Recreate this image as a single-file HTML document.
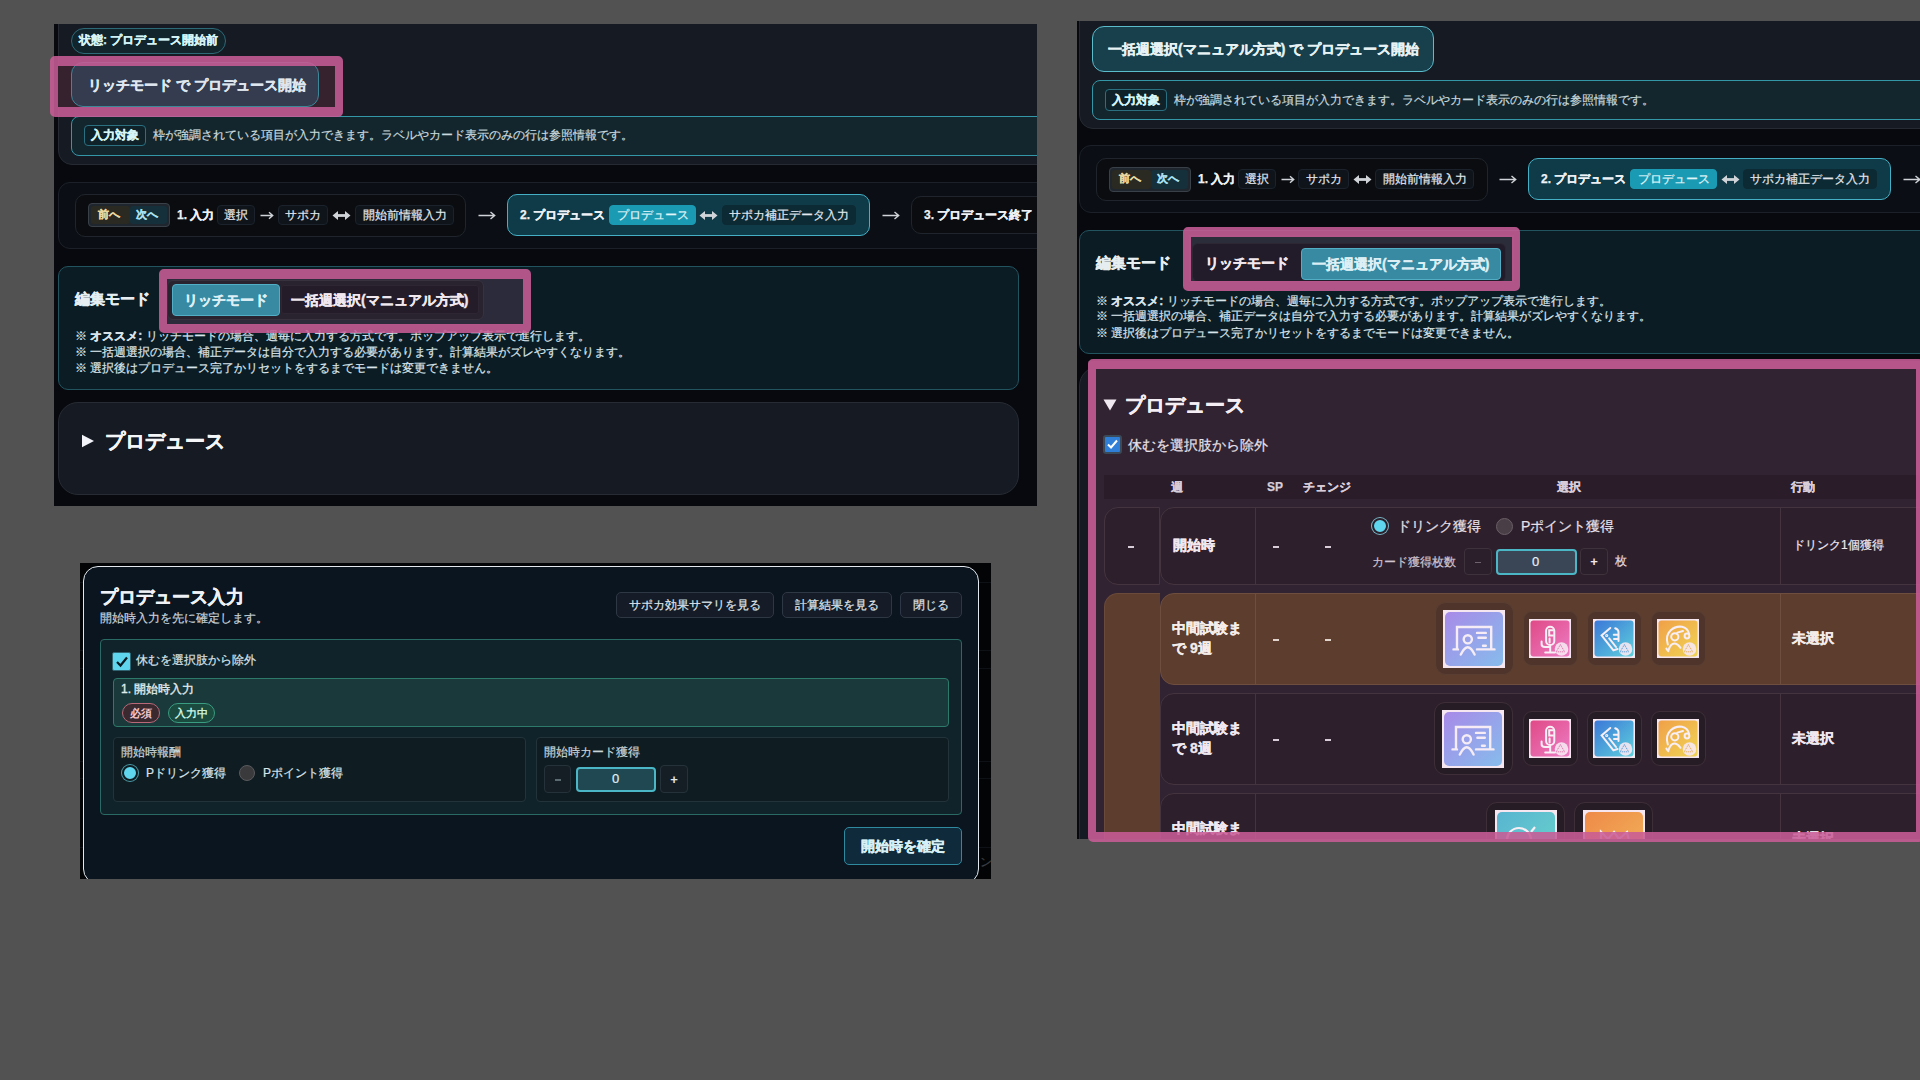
<!DOCTYPE html>
<html lang="ja">
<head>
<meta charset="utf-8">
<style>
*{box-sizing:border-box;margin:0;padding:0}
html,body{width:1920px;height:1080px;overflow:hidden;background:#525252;font-family:"Liberation Sans",sans-serif;color:#e6edf3}
.a{position:absolute}
.t{position:absolute;white-space:nowrap;line-height:1}
.t:not(.b){-webkit-text-stroke:0.2px currentColor}
.t b{-webkit-text-stroke:0.3px currentColor}
.b{font-weight:bold;-webkit-text-stroke:0.25px currentColor}
.bb{-webkit-text-stroke:0.35px currentColor}
.clip{position:absolute;overflow:hidden}
.pink{position:absolute;border:8px solid rgba(200,92,150,0.88);border-width:10px 8px 10px 8px;border-radius:5px}
.pfill{position:absolute;background:#36222f}
.chip{position:absolute;border-radius:4px;background:#0f141b;border:1px solid #1b222b;font-size:12px;color:#e2e8ee;-webkit-text-stroke:0.2px currentColor;display:flex;align-items:center;justify-content:center}
.btn{position:absolute;background:#151c27;border:1px solid #2e3744;border-radius:5px;font-size:12px;color:#dfe5ea;-webkit-text-stroke:0.2px currentColor;display:flex;align-items:center;justify-content:center;line-height:1}
.badge{position:absolute;border:1px solid;border-radius:10px;font-size:11px;font-weight:bold;display:flex;align-items:center;justify-content:center;line-height:1}
.sbtn{position:absolute;background:#141e24;border:1px solid #26323a;border-radius:4px;font-size:13px;display:flex;align-items:center;justify-content:center;line-height:1}
</style>
</head>
<body>
<svg width="0" height="0" style="position:absolute">
<defs>
<linearGradient id="gP" x1="0" y1="0" x2="1" y2="1"><stop offset="0" stop-color="#a88ae8"/><stop offset="1" stop-color="#86bcec"/></linearGradient>
<linearGradient id="gK" x1="0" y1="0" x2="1" y2="1"><stop offset="0" stop-color="#e04a86"/><stop offset="1" stop-color="#ec7cc4"/></linearGradient>
<linearGradient id="gB" x1="0" y1="0" x2="1" y2="1"><stop offset="0" stop-color="#3c78d8"/><stop offset="1" stop-color="#5ed0dc"/></linearGradient>
<linearGradient id="gO" x1="0" y1="0" x2="1" y2="1"><stop offset="0" stop-color="#f0a048"/><stop offset="1" stop-color="#f0d454"/></linearGradient>
<linearGradient id="gT" x1="0" y1="0" x2="1" y2="1"><stop offset="0" stop-color="#58b4d0"/><stop offset="1" stop-color="#6ad4cc"/></linearGradient>
<linearGradient id="gR" x1="0" y1="0" x2="1" y2="1"><stop offset="0" stop-color="#ee8a48"/><stop offset="1" stop-color="#f2b45a"/></linearGradient>
</defs></svg>

<!-- ================= PANEL A ================= -->
<div class="clip" style="left:54px;top:24px;width:983px;height:482px;background:#07090e">
  <!-- top container -->
  <div class="a" style="left:4px;top:-20px;width:1000px;height:161px;background:#161a22;border:1px solid #262b33;border-radius:0 0 0 14px"></div>
  <!-- status pill -->
  <div class="a" style="left:17px;top:4px;width:155px;height:26px;border:1px solid #2d6a78;background:#12242c;border-radius:13px"></div>
  <div class="t b" style="left:25px;top:10px;font-size:12px;color:#d5f5f7">状態: プロデュース開始前</div>
  <div class="pfill" style="left:4px;top:42px;width:277px;height:41px"></div>
  <!-- start button -->
  <div class="a" style="left:17px;top:38px;width:248px;height:45px;border:1px solid #3c8798;background:#363c50;border-radius:12px"></div>
  <div class="t b bb" style="left:34px;top:54px;font-size:14px;color:#dfe6ee">リッチモード で プロデュース開始</div>
  <!-- info bar -->
  <div class="a" style="left:17px;top:92px;width:1000px;height:40px;border:1px solid #3497a8;background:#13262e;border-radius:8px"></div>
  <div class="a" style="left:30px;top:101px;width:62px;height:21px;border:1px solid #2a7080;background:#0f2229;border-radius:4px"></div>
  <div class="t b" style="left:37px;top:105px;font-size:12px;color:#d5f5f7">入力対象</div>
  <div class="t" style="left:99px;top:105px;font-size:12px;color:#c8d8dc">枠が強調されている項目が入力できます。ラベルやカード表示のみの行は参照情報です。</div>

  <!-- stepper -->
  <div class="a" style="left:4px;top:158px;width:1000px;height:67px;border:1px solid #1c2129;background:#0b0e14;border-radius:12px"></div>
  <div class="a" style="left:21px;top:170px;width:391px;height:43px;border:1px solid #20252d;background:#0a0c10;border-radius:10px"></div>
  <div class="a" style="left:34px;top:179px;width:82px;height:24px;border:1px solid #3a4048;background:#20262e;border-radius:4px"></div>
  <div class="a" style="left:37px;top:182px;width:39px;height:18px;background:#2a2a22;border-radius:3px"></div>
  <div class="a" style="left:76px;top:182px;width:37px;height:18px;background:#15303a;border-radius:3px"></div>
  <div class="t b" style="left:44px;top:185px;font-size:11px;color:#e8d8a0">前へ</div>
  <div class="t b" style="left:82px;top:185px;font-size:11px;color:#a8e0f0">次へ</div>
  <div class="t b" style="left:123px;top:185px;font-size:12px;color:#eef2f6">1. 入力</div>
  <div class="chip" style="left:163px;top:181px;width:38px;height:20px">選択</div>
  <svg class="a" style="left:206px;top:186px" width="14" height="11"><path d="M0.5 5.5H12.5M9 2.3L12.7 5.5L9 8.7" stroke="#d0d4d8" stroke-width="1.4" fill="none"/></svg>
  <div class="chip" style="left:224px;top:181px;width:50px;height:20px">サポカ</div>
  <svg class="a" style="left:278px;top:186px" width="19" height="11"><path d="M3.5 5.5H15.5" stroke="#d0d4d8" stroke-width="2.8"/><path d="M0.5 5.5L6 1V10Z M18.5 5.5L13 1V10Z" fill="#d0d4d8"/></svg>
  <div class="chip" style="left:301px;top:181px;width:99px;height:20px">開始前情報入力</div>
  <svg class="a" style="left:424px;top:186px" width="18" height="11"><path d="M0.5 5.5H16.5M12.5 2L16.7 5.5L12.5 9" stroke="#d0d4d8" stroke-width="1.4" fill="none"/></svg>
  <div class="a" style="left:453px;top:170px;width:363px;height:42px;border:1px solid #45b0c5;background:#0f3a48;border-radius:10px"></div>
  <div class="t b" style="left:466px;top:185px;font-size:12px;color:#eef2f6">2. プロデュース</div>
  <div class="chip" style="left:555px;top:181px;width:87px;height:20px;background:#1b9bb3;border-color:#1b9bb3;color:#e0f6fa">プロデュース</div>
  <svg class="a" style="left:645px;top:186px" width="19" height="11"><path d="M3.5 5.5H15.5" stroke="#d0d4d8" stroke-width="2.8"/><path d="M0.5 5.5L6 1V10Z M18.5 5.5L13 1V10Z" fill="#d0d4d8"/></svg>
  <div class="chip" style="left:668px;top:181px;width:134px;height:20px;background:#0c2a33;border-color:#0c2a33">サポカ補正データ入力</div>
  <svg class="a" style="left:828px;top:186px" width="18" height="11"><path d="M0.5 5.5H16.5M12.5 2L16.7 5.5L12.5 9" stroke="#d0d4d8" stroke-width="1.4" fill="none"/></svg>
  <div class="a" style="left:857px;top:172px;width:200px;height:38px;border:1px solid #20252d;background:#0a0c10;border-radius:10px"></div>
  <div class="t b" style="left:870px;top:185px;font-size:12px;color:#eef2f6">3. プロデュース終了</div>

  <!-- edit mode -->
  <div class="a" style="left:4px;top:242px;width:961px;height:124px;border:1px solid #22545f;background:#0c1c25;border-radius:10px"></div>
  <div class="t b bb" style="left:21px;top:267px;font-size:15px;color:#e6eef2">編集モード</div>
  <div class="pfill" style="left:113px;top:255px;width:356px;height:46px;background:#2b2b3b"></div>
  <div class="a" style="left:113px;top:256px;width:317px;height:40px;border:1px solid #38323e;background:#28232e;border-radius:6px"></div>
  <div class="a" style="left:118px;top:260px;width:108px;height:32px;background:#3889a2;border:1px solid #52aec4;border-radius:4px"></div>
  <div class="a" style="left:227px;top:261px;width:198px;height:29px;background:#241c28;border:1px solid #2e2632;border-radius:3px"></div>
  <div class="t b bb" style="left:130px;top:269px;font-size:14px;color:#dceff5">リッチモード</div>
  <div class="t b bb" style="left:237px;top:269px;font-size:14px;color:#f0e8ee">一括週選択(マニュアル方式)</div>
  <div class="t" style="left:21px;top:306px;font-size:12px;color:#d8e4ea">※ <b>オススメ:</b> リッチモードの場合、週毎に入力する方式です。ポップアップ表示で進行します。</div>
  <div class="t" style="left:21px;top:322px;font-size:12px;color:#d8e4ea">※ 一括週選択の場合、補正データは自分で入力する必要があります。計算結果がズレやすくなります。</div>
  <div class="t" style="left:21px;top:338px;font-size:12px;color:#d8e4ea">※ 選択後はプロデュース完了かリセットをするまでモードは変更できません。</div>

  <!-- collapsed produce -->
  <div class="a" style="left:4px;top:378px;width:961px;height:93px;border:1px solid #272b34;background:#161a22;border-radius:20px"></div>
  <svg class="a" style="left:28px;top:410px" width="12" height="14"><path d="M0 0.8V13.2L12 7Z" fill="#f2f4fa"/></svg>
  <div class="t b bb" style="left:51px;top:407px;font-size:20px;color:#f4f6f8">プロデュース</div>
</div>
<div class="pink" style="left:50px;top:56px;width:293px;height:61px"></div>
<div class="pink" style="left:159px;top:269px;width:372px;height:64px;border-width:10px 8px 9px 8px"></div>

<!-- ================= PANEL B ================= -->
<div class="clip" style="left:80px;top:563px;width:911px;height:316px;background:#030405">
  <div class="a" style="left:0;top:19px;width:911px;height:1px;background:#0e1216"></div>
  <div class="a" style="left:0;top:87px;width:911px;height:1px;background:#0e1216"></div>
  <div class="a" style="left:0;top:284px;width:911px;height:1px;background:#0e1216"></div>
  <div class="a" style="left:0;top:105px;width:911px;height:1px;background:#0e1216"></div>
  <div class="a" style="left:0;top:198px;width:911px;height:1px;background:#0e1216"></div>
  <div class="a" style="left:0;top:215px;width:911px;height:1px;background:#0e1216"></div>
  <div class="t" style="left:900px;top:293px;font-size:12px;color:#3a3e44">ンに</div>
  <!-- modal -->
  <div class="a" style="left:3px;top:3px;width:896px;height:318px;background:#0b1520;border:1px solid #e2e8ee;border-radius:15px"></div>
  <div class="t b bb" style="left:20px;top:25px;font-size:18px;color:#eef2f6">プロデュース入力</div>
  <div class="t" style="left:20px;top:49px;font-size:12px;color:#c8d2da">開始時入力を先に確定します。</div>
  <div class="btn" style="left:536px;top:29px;width:158px;height:26px">サポカ効果サマリを見る</div>
  <div class="btn" style="left:702px;top:29px;width:110px;height:26px">計算結果を見る</div>
  <div class="btn" style="left:820px;top:29px;width:62px;height:26px">閉じる</div>
  <!-- green section -->
  <div class="a" style="left:20px;top:76px;width:862px;height:176px;background:#11232a;border:1px solid #2a6a64;border-radius:4px"></div>
  <div class="a" style="left:32px;top:89px;width:19px;height:19px;background:#5fd6ee;border:1px solid #2f6470;border-radius:2px"></div>
  <svg class="a" style="left:35px;top:92px" width="14" height="13"><path d="M2 7L5.5 10.5L12 2.5" stroke="#0b1a20" stroke-width="2.2" fill="none"/></svg>
  <div class="t" style="left:56px;top:91px;font-size:12px;color:#d8e4ea">休むを選択肢から除外</div>
  <div class="a" style="left:33px;top:115px;width:836px;height:49px;background:#19393b;border:1px solid #2d7a6a;border-radius:4px"></div>
  <div class="t" style="left:41px;top:120px;font-size:12px;color:#e0ecec;-webkit-text-stroke:0.35px currentColor">1. 開始時入力</div>
  <div class="badge" style="left:42px;top:140px;width:38px;height:20px;background:#3a2a30;border-color:#b86878;color:#f4c8d0">必須</div>
  <div class="badge" style="left:88px;top:140px;width:47px;height:20px;background:#1b4a3f;border-color:#3a9c80;color:#c8f4e0">入力中</div>
  <!-- sub boxes -->
  <div class="a" style="left:33px;top:174px;width:413px;height:65px;background:#0f1d22;border:1px solid #22343a;border-radius:4px"></div>
  <div class="t" style="left:41px;top:183px;font-size:12px;color:#c8d4d8">開始時報酬</div>
  <div class="a" style="left:42px;top:202px;width:16px;height:16px;border-radius:50%;background:#5fd6ee;border:2px solid #0f1d22;box-shadow:0 0 0 1px #4a9aa8"></div>
  <div class="t" style="left:66px;top:204px;font-size:12px;color:#d8e4ea">Pドリンク獲得</div>
  <div class="a" style="left:159px;top:202px;width:16px;height:16px;border-radius:50%;background:#3a3a3c;border:1px solid #5a5a5e"></div>
  <div class="t" style="left:183px;top:204px;font-size:12px;color:#d8e4ea">Pポイント獲得</div>
  <div class="a" style="left:456px;top:174px;width:413px;height:65px;background:#0f1d22;border:1px solid #22343a;border-radius:4px"></div>
  <div class="t" style="left:464px;top:183px;font-size:12px;color:#c8d4d8">開始時カード獲得</div>
  <div class="sbtn" style="left:464px;top:202px;width:27px;height:28px;color:#66767c"><span style="display:block;width:6px;height:1.5px;background:#5a6a70;margin-top:2px"></span></div>
  <div class="a" style="left:496px;top:204px;width:80px;height:25px;background:#1f4852;border:2px solid #4ab6c6;border-radius:4px"></div>
  <div class="t" style="left:532px;top:209px;font-size:13px;color:#e0f0f4">0</div>
  <div class="sbtn" style="left:580px;top:202px;width:28px;height:28px;color:#e0e8ec;font-weight:bold">+</div>
  <!-- confirm -->
  <div class="a" style="left:764px;top:264px;width:118px;height:38px;background:#0f2a3b;border:1px solid #2f8aa0;border-radius:5px"></div>
  <div class="t b bb" style="left:781px;top:276px;font-size:14px;color:#d6f0f6">開始時を確定</div>
</div>

<!-- ================= PANEL C ================= -->
<div class="clip" style="left:1077px;top:21px;width:843px;height:818px;background:#07090e">
  <!-- top container -->
  <div class="a" style="left:2px;top:-20px;width:900px;height:128px;background:#161a22;border:1px solid #262b33;border-radius:0 0 0 14px"></div>
  <div class="a" style="left:15px;top:5px;width:342px;height:46px;border:1px solid #5bbccc;background:#173f4c;border-radius:12px"></div>
  <div class="t b bb" style="left:31px;top:21px;font-size:14px;color:#e6f2f4">一括週選択(マニュアル方式) で プロデュース開始</div>
  <div class="a" style="left:15px;top:59px;width:900px;height:40px;border:1px solid #3497a8;background:#13262e;border-radius:8px"></div>
  <div class="a" style="left:28px;top:68px;width:62px;height:22px;border:1px solid #2a7080;background:#0f2229;border-radius:4px"></div>
  <div class="t b" style="left:35px;top:73px;font-size:12px;color:#d5f5f7">入力対象</div>
  <div class="t" style="left:97px;top:73px;font-size:12px;color:#c8d8dc">枠が強調されている項目が入力できます。ラベルやカード表示のみの行は参照情報です。</div>

  <!-- stepper -->
  <div class="a" style="left:2px;top:124px;width:900px;height:68px;border:1px solid #1c2129;background:#0b0e14;border-radius:12px"></div>
  <div class="a" style="left:19px;top:137px;width:392px;height:43px;border:1px solid #20252d;background:#0a0c10;border-radius:10px"></div>
  <div class="a" style="left:32px;top:146px;width:82px;height:25px;border:1px solid #3a4048;background:#20262e;border-radius:4px"></div>
  <div class="a" style="left:35px;top:149px;width:39px;height:19px;background:#2a2a22;border-radius:3px"></div>
  <div class="a" style="left:74px;top:149px;width:37px;height:19px;background:#15303a;border-radius:3px"></div>
  <div class="t b" style="left:42px;top:152px;font-size:11px;color:#e8d8a0">前へ</div>
  <div class="t b" style="left:80px;top:152px;font-size:11px;color:#a8e0f0">次へ</div>
  <div class="t b" style="left:121px;top:152px;font-size:12px;color:#eef2f6">1. 入力</div>
  <div class="chip" style="left:161px;top:148px;width:38px;height:20px">選択</div>
  <svg class="a" style="left:204px;top:153px" width="14" height="11"><path d="M0.5 5.5H12.5M9 2.3L12.7 5.5L9 8.7" stroke="#d0d4d8" stroke-width="1.4" fill="none"/></svg>
  <div class="chip" style="left:221px;top:148px;width:51px;height:20px">サポカ</div>
  <svg class="a" style="left:276px;top:153px" width="19" height="11"><path d="M3.5 5.5H15.5" stroke="#d0d4d8" stroke-width="2.8"/><path d="M0.5 5.5L6 1V10Z M18.5 5.5L13 1V10Z" fill="#d0d4d8"/></svg>
  <div class="chip" style="left:298px;top:148px;width:99px;height:20px">開始前情報入力</div>
  <svg class="a" style="left:422px;top:153px" width="18" height="11"><path d="M0.5 5.5H16.5M12.5 2L16.7 5.5L12.5 9" stroke="#d0d4d8" stroke-width="1.4" fill="none"/></svg>
  <div class="a" style="left:451px;top:137px;width:363px;height:42px;border:1px solid #45b0c5;background:#0f3a48;border-radius:10px"></div>
  <div class="t b" style="left:464px;top:152px;font-size:12px;color:#eef2f6">2. プロデュース</div>
  <div class="chip" style="left:553px;top:148px;width:87px;height:20px;background:#1b9bb3;border-color:#1b9bb3;color:#e0f6fa">プロデュース</div>
  <svg class="a" style="left:644px;top:153px" width="19" height="11"><path d="M3.5 5.5H15.5" stroke="#d0d4d8" stroke-width="2.8"/><path d="M0.5 5.5L6 1V10Z M18.5 5.5L13 1V10Z" fill="#d0d4d8"/></svg>
  <div class="chip" style="left:666px;top:148px;width:134px;height:20px;background:#0c2a33;border-color:#0c2a33">サポカ補正データ入力</div>
  <svg class="a" style="left:826px;top:153px" width="18" height="11"><path d="M0.5 5.5H16.5M12.5 2L16.7 5.5L12.5 9" stroke="#d0d4d8" stroke-width="1.4" fill="none"/></svg>

  <!-- edit mode -->
  <div class="a" style="left:2px;top:209px;width:900px;height:124px;border:1px solid #22545f;background:#0c1c25;border-radius:10px"></div>
  <div class="t b bb" style="left:19px;top:234px;font-size:15px;color:#e6eef2">編集モード</div>
  <div class="pfill" style="left:112px;top:214px;width:325px;height:47px;background:#2c2d3b"></div>
  <div class="a" style="left:115px;top:222px;width:314px;height:39px;border:1px solid #2c2733;background:#221c2a;border-radius:6px"></div>
  <div class="t b bb" style="left:128px;top:235px;font-size:14px;color:#f0e8ee">リッチモード</div>
  <div class="a" style="left:224px;top:227px;width:200px;height:32px;background:#3889a2;border:1px solid #52aec4;border-radius:4px"></div>
  <div class="t b bb" style="left:235px;top:236px;font-size:14px;color:#dceff5">一括週選択(マニュアル方式)</div>
  <div class="t" style="left:19px;top:274px;font-size:12px;color:#d8e4ea">※ <b>オススメ:</b> リッチモードの場合、週毎に入力する方式です。ポップアップ表示で進行します。</div>
  <div class="t" style="left:19px;top:289px;font-size:12px;color:#d8e4ea">※ 一括週選択の場合、補正データは自分で入力する必要があります。計算結果がズレやすくなります。</div>
  <div class="t" style="left:19px;top:306px;font-size:12px;color:#d8e4ea">※ 選択後はプロデュース完了かリセットをするまでモードは変更できません。</div>

  <!-- produce panel -->
  <div class="a" style="left:2px;top:345px;width:900px;height:600px;border:1px solid #272b34;background:#161a22;border-radius:20px"></div>
  <div class="a" style="left:11px;top:340px;width:840px;height:480px;background:#322332"></div>
  <svg class="a" style="left:26px;top:378px" width="14" height="12"><path d="M0.5 0.5H13.5L7 11.5Z" fill="#f0e8f0"/></svg>
  <div class="t b bb" style="left:48px;top:374px;font-size:20px;color:#f4eef4">プロデュース</div>
  <div class="a" style="left:26px;top:414px;width:19px;height:19px;background:#2f7fd8;border:2px solid #3a4a58;border-radius:3px"></div>
  <svg class="a" style="left:29px;top:417px" width="13" height="13"><path d="M2 6.5L5 9.5L11 2.5" stroke="#ffffff" stroke-width="2" fill="none"/></svg>
  <div class="t" style="left:51px;top:417px;font-size:14px;color:#e8e0e8">休むを選択肢から除外</div>

  <!-- table header -->
  <div class="a" style="left:27px;top:454px;width:830px;height:24px;background:#2a1c29"></div>
  <div class="t b" style="left:94px;top:460px;font-size:12px;color:#d8ccd8">週</div>
  <div class="t b" style="left:190px;top:460px;font-size:12px;color:#d8ccd8">SP</div>
  <div class="t b" style="left:226px;top:460px;font-size:12px;color:#d8ccd8">チェンジ</div>
  <div class="t b" style="left:480px;top:460px;font-size:12px;color:#d8ccd8">選択</div>
  <div class="t b" style="left:714px;top:460px;font-size:12px;color:#d8ccd8">行動</div>

  <!-- row 1 -->
  <div class="a" style="left:27px;top:486px;width:56px;height:78px;background:#2e1f2c;border:1px solid #44343f;border-radius:14px 0 0 14px"></div>
  <div class="a" style="left:51px;top:525px;width:6px;height:2px;background:#d8ccd8"></div>
  <div class="a" style="left:83px;top:486px;width:820px;height:78px;background:#2e1f2c;border:1px solid #44343f;border-radius:14px 0 0 14px"></div>
  <div class="a" style="left:178px;top:487px;width:1px;height:76px;background:#44343f"></div>
  <div class="a" style="left:703px;top:487px;width:1px;height:76px;background:#44343f"></div>
  <div class="t b bb" style="left:96px;top:517px;font-size:14px;color:#f0e8f0">開始時</div>
  <div class="a" style="left:196px;top:525px;width:6px;height:2px;background:#d8ccd8"></div>
  <div class="a" style="left:248px;top:525px;width:6px;height:2px;background:#d8ccd8"></div>
  <div class="a" style="left:295px;top:497px;width:16px;height:16px;border-radius:50%;background:#5fd6ee;border:2px solid #2a1f2a;box-shadow:0 0 0 1px #7ab8c8"></div>
  <div class="t" style="left:320px;top:498px;font-size:14px;color:#e8e0e8">ドリンク獲得</div>
  <div class="a" style="left:419px;top:497px;width:17px;height:17px;border-radius:50%;background:#4a3e46;border:1px solid #6a5e66"></div>
  <div class="t" style="left:444px;top:498px;font-size:14px;color:#e8e0e8">Pポイント獲得</div>
  <div class="t" style="left:295px;top:535px;font-size:12px;color:#cfc4cf">カード獲得枚数</div>
  <div class="sbtn" style="left:387px;top:527px;width:28px;height:27px;background:#2a1f2a;border-color:#3e323c;color:#6e626c"><span style="display:block;width:6px;height:1.5px;background:#6e626c;margin-top:2px"></span></div>
  <div class="a" style="left:419px;top:528px;width:81px;height:26px;background:#3a4656;border:2px solid #4ab6c6;border-radius:4px"></div>
  <div class="t" style="left:455px;top:534px;font-size:13px;color:#e8f0f4">0</div>
  <div class="sbtn" style="left:503px;top:527px;width:28px;height:27px;background:#2a1f2a;border-color:#3e323c;color:#f0e8f0;font-weight:bold">+</div>
  <div class="t" style="left:538px;top:534px;font-size:12px;color:#e0d8e0">枚</div>
  <div class="t" style="left:716px;top:518px;font-size:12px;color:#f0e8f0">ドリンク1個獲得</div>

  <!-- week column spanning brown -->
  <div class="a" style="left:27px;top:572px;width:56px;height:400px;background:#5c3d2e;border:1px solid #6a4a3a;border-right:none;border-radius:14px 0 0 0"></div>
  <!-- row 2 brown -->
  <div class="a" style="left:83px;top:572px;width:800px;height:92px;background:#5c3d2e;border:1px solid #6e4e3e;border-radius:14px 0 0 14px"></div>
  <div class="a" style="left:178px;top:573px;width:1px;height:90px;background:#6e4e3e"></div>
  <div class="a" style="left:703px;top:573px;width:1px;height:90px;background:#6e4e3e"></div>
  <div class="t b bb" style="left:95px;top:597px;font-size:14px;line-height:20px;color:#f4ece8;white-space:normal;width:80px">中間試験ま<br>で 9週</div>
  <div class="a" style="left:196px;top:618px;width:6px;height:2px;background:#e0d4cc"></div>
  <div class="a" style="left:248px;top:618px;width:6px;height:2px;background:#e0d4cc"></div>
  <div class="t b bb" style="left:715px;top:610px;font-size:14px;color:#f4ece8">未選択</div>
  <div class="a" style="left:358px;top:581px;width:79px;height:73px;background:#4e342a;border:1px solid #5a3e32;border-radius:11px"></div>
<svg class="a" style="left:366px;top:589px" width="62" height="58" viewBox="0 0 62 58"><rect width="62" height="58" fill="#f6e6f0"/><rect x="2" y="2" width="58" height="54" rx="5" fill="url(#gP)"/>
<g stroke="#f6ecf6" stroke-width="2.4" fill="none" stroke-linecap="round"><path d="M10.5 39.4H15M14 39.4V17H48.2V39.4M34 39.4H51.5"/><circle cx="24.8" cy="29.3" r="4.1"/><path d="M17.8 44.6Q24.8 30 31.6 44.6"/><path d="M34 22.9H42.8M35.4 27.8H42.8M40 35.8H42.8"/></g></svg>
  <div class="a" style="left:446px;top:590px;width:55px;height:55px;background:#4e342a;border:1px solid #5a3e32;border-radius:9px"></div>
<svg class="a" style="left:452px;top:598px" width="42" height="39" viewBox="0 0 42 39"><rect width="42" height="39" fill="#f6e6f0"/><rect x="1.5" y="1.5" width="39" height="36" rx="3" fill="url(#gK)"/>
<g stroke="#f8eef6" stroke-width="2" fill="none" stroke-linecap="round"><rect x="17.1" y="7.7" width="8.2" height="18.4" rx="4.1"/><path d="M23.8 11.2H20.2V16.5H23.8M20.6 19.5V23.5M12.6 22.6V25.2Q12.6 28 16 28H21.2M21.2 27V32.6M16.2 33.4H26"/></g><circle cx="32.5" cy="30" r="6.8" fill="#f6e8f2" opacity="0.9"/><path d="M31.4 25.6L35.6 32.8H27.2Z" stroke="#d86aa0" stroke-width="0.9" fill="none" stroke-dasharray="1.2 0.8"/></svg>
  <div class="a" style="left:510px;top:590px;width:55px;height:55px;background:#4e342a;border:1px solid #5a3e32;border-radius:9px"></div>
<svg class="a" style="left:516px;top:598px" width="42" height="39" viewBox="0 0 42 39"><rect width="42" height="39" fill="#f6e6f0"/><rect x="1.5" y="1.5" width="39" height="36" rx="3" fill="url(#gB)"/>
<g stroke="#f8eef6" stroke-width="2" fill="none" stroke-linecap="round"><path d="M17.3 9L8.6 16.4L20.4 31.4L24.5 30M16.2 19.4L23 28M22.2 9.3Q25.5 10.5 25.5 13V22M20.8 15.8H24.6M21 19.9H24.6"/><circle cx="13.7" cy="16.5" r="0.6"/></g><circle cx="32.5" cy="30" r="6.8" fill="#f6e8f2" opacity="0.9"/><path d="M31.4 25.6L35.6 32.8H27.2Z" stroke="#4a90d0" stroke-width="0.9" fill="none" stroke-dasharray="1.2 0.8"/></svg>
  <div class="a" style="left:574px;top:590px;width:55px;height:55px;background:#4e342a;border:1px solid #5a3e32;border-radius:9px"></div>
<svg class="a" style="left:580px;top:598px" width="42" height="39" viewBox="0 0 42 39"><rect width="42" height="39" fill="#f6e6f0"/><rect x="1.5" y="1.5" width="39" height="36" rx="3" fill="url(#gO)"/>
<g stroke="#f8eef6" stroke-width="2" fill="none" stroke-linecap="round"><path d="M10.8 25.5Q8 17 13.5 11.5Q18.5 6.8 25 7.8Q30.5 9 32 14.5"/><path d="M9.4 29.6L11.2 32.2M11.2 32Q13.5 24.6 17.3 24.6Q20.5 24.6 23.5 28.8M20.3 13.6L26 12"/><circle cx="17.8" cy="17.8" r="3.6"/><circle cx="30" cy="17" r="2.4"/></g><circle cx="32.5" cy="30" r="6.8" fill="#f6e8f2" opacity="0.9"/><path d="M31.4 25.6L35.6 32.8H27.2Z" stroke="#e0a848" stroke-width="0.9" fill="none" stroke-dasharray="1.2 0.8"/></svg>

  <!-- row 3 -->
  <div class="a" style="left:83px;top:672px;width:800px;height:92px;background:#2e1f2c;border:1px solid #44343f;border-radius:14px 0 0 14px"></div>
  <div class="a" style="left:178px;top:673px;width:1px;height:90px;background:#44343f"></div>
  <div class="a" style="left:703px;top:673px;width:1px;height:90px;background:#44343f"></div>
  <div class="t b bb" style="left:95px;top:697px;font-size:14px;line-height:20px;color:#f0e8f0;white-space:normal;width:80px">中間試験ま<br>で 8週</div>
  <div class="a" style="left:196px;top:718px;width:6px;height:2px;background:#d8ccd8"></div>
  <div class="a" style="left:248px;top:718px;width:6px;height:2px;background:#d8ccd8"></div>
  <div class="t b bb" style="left:715px;top:710px;font-size:14px;color:#f0e8f0">未選択</div>
  <div class="a" style="left:357px;top:681px;width:79px;height:73px;background:#261c26;border:1px solid #3e2e38;border-radius:11px"></div>
<svg class="a" style="left:365px;top:689px" width="62" height="58" viewBox="0 0 62 58"><rect width="62" height="58" fill="#f6e6f0"/><rect x="2" y="2" width="58" height="54" rx="5" fill="url(#gP)"/>
<g stroke="#f6ecf6" stroke-width="2.4" fill="none" stroke-linecap="round"><path d="M10.5 39.4H15M14 39.4V17H48.2V39.4M34 39.4H51.5"/><circle cx="24.8" cy="29.3" r="4.1"/><path d="M17.8 44.6Q24.8 30 31.6 44.6"/><path d="M34 22.9H42.8M35.4 27.8H42.8M40 35.8H42.8"/></g></svg>
  <div class="a" style="left:446px;top:690px;width:55px;height:55px;background:#261c26;border:1px solid #3e2e38;border-radius:9px"></div>
<svg class="a" style="left:452px;top:698px" width="42" height="39" viewBox="0 0 42 39"><rect width="42" height="39" fill="#f6e6f0"/><rect x="1.5" y="1.5" width="39" height="36" rx="3" fill="url(#gK)"/>
<g stroke="#f8eef6" stroke-width="2" fill="none" stroke-linecap="round"><rect x="17.1" y="7.7" width="8.2" height="18.4" rx="4.1"/><path d="M23.8 11.2H20.2V16.5H23.8M20.6 19.5V23.5M12.6 22.6V25.2Q12.6 28 16 28H21.2M21.2 27V32.6M16.2 33.4H26"/></g><circle cx="32.5" cy="30" r="6.8" fill="#f6e8f2" opacity="0.9"/><path d="M31.4 25.6L35.6 32.8H27.2Z" stroke="#d86aa0" stroke-width="0.9" fill="none" stroke-dasharray="1.2 0.8"/></svg>
  <div class="a" style="left:510px;top:690px;width:55px;height:55px;background:#261c26;border:1px solid #3e2e38;border-radius:9px"></div>
<svg class="a" style="left:516px;top:698px" width="42" height="39" viewBox="0 0 42 39"><rect width="42" height="39" fill="#f6e6f0"/><rect x="1.5" y="1.5" width="39" height="36" rx="3" fill="url(#gB)"/>
<g stroke="#f8eef6" stroke-width="2" fill="none" stroke-linecap="round"><path d="M17.3 9L8.6 16.4L20.4 31.4L24.5 30M16.2 19.4L23 28M22.2 9.3Q25.5 10.5 25.5 13V22M20.8 15.8H24.6M21 19.9H24.6"/><circle cx="13.7" cy="16.5" r="0.6"/></g><circle cx="32.5" cy="30" r="6.8" fill="#f6e8f2" opacity="0.9"/><path d="M31.4 25.6L35.6 32.8H27.2Z" stroke="#4a90d0" stroke-width="0.9" fill="none" stroke-dasharray="1.2 0.8"/></svg>
  <div class="a" style="left:574px;top:690px;width:55px;height:55px;background:#261c26;border:1px solid #3e2e38;border-radius:9px"></div>
<svg class="a" style="left:580px;top:698px" width="42" height="39" viewBox="0 0 42 39"><rect width="42" height="39" fill="#f6e6f0"/><rect x="1.5" y="1.5" width="39" height="36" rx="3" fill="url(#gO)"/>
<g stroke="#f8eef6" stroke-width="2" fill="none" stroke-linecap="round"><path d="M10.8 25.5Q8 17 13.5 11.5Q18.5 6.8 25 7.8Q30.5 9 32 14.5"/><path d="M9.4 29.6L11.2 32.2M11.2 32Q13.5 24.6 17.3 24.6Q20.5 24.6 23.5 28.8M20.3 13.6L26 12"/><circle cx="17.8" cy="17.8" r="3.6"/><circle cx="30" cy="17" r="2.4"/></g><circle cx="32.5" cy="30" r="6.8" fill="#f6e8f2" opacity="0.9"/><path d="M31.4 25.6L35.6 32.8H27.2Z" stroke="#e0a848" stroke-width="0.9" fill="none" stroke-dasharray="1.2 0.8"/></svg>

  <!-- row 4 -->
  <div class="a" style="left:83px;top:772px;width:800px;height:92px;background:#2e1f2c;border:1px solid #44343f;border-radius:14px 0 0 14px"></div>
  <div class="a" style="left:178px;top:773px;width:1px;height:90px;background:#44343f"></div>
  <div class="a" style="left:703px;top:773px;width:1px;height:90px;background:#44343f"></div>
  <div class="t b bb" style="left:95px;top:797px;font-size:14px;line-height:20px;color:#f0e8f0">中間試験ま</div>
  <div class="t b bb" style="left:715px;top:810px;font-size:14px;color:#f0e8f0">未選択</div>
  <div class="a" style="left:409px;top:781px;width:79px;height:73px;background:#261c26;border:1px solid #3e2e38;border-radius:11px"></div>
  <svg class="a" style="left:418px;top:789px" width="62" height="58" viewBox="0 0 62 58"><rect width="62" height="58" fill="#f6e6f0"/><rect x="2" y="2" width="58" height="54" rx="5" fill="url(#gT)"/><g stroke="#f8eef6" stroke-width="2.2" fill="none"><circle cx="24" cy="30" r="12"/><path d="M40 17L36 22"/></g></svg>
  <div class="a" style="left:497px;top:781px;width:79px;height:73px;background:#261c26;border:1px solid #3e2e38;border-radius:11px"></div>
  <svg class="a" style="left:506px;top:789px" width="62" height="58" viewBox="0 0 62 58"><rect width="62" height="58" fill="#f6e6f0"/><rect x="2" y="2" width="58" height="54" rx="5" fill="url(#gR)"/><g stroke="#f8eef6" stroke-width="2.2" fill="none"><path d="M18 22L18 31H46L44 22L36 29L31 22L25 29Z"/></g></svg>

</div>

<div class="pink" style="left:1183px;top:227px;width:337px;height:64px"></div>
<div class="pink" style="left:1088px;top:359px;width:836px;height:483px"></div>
</body>
</html>
